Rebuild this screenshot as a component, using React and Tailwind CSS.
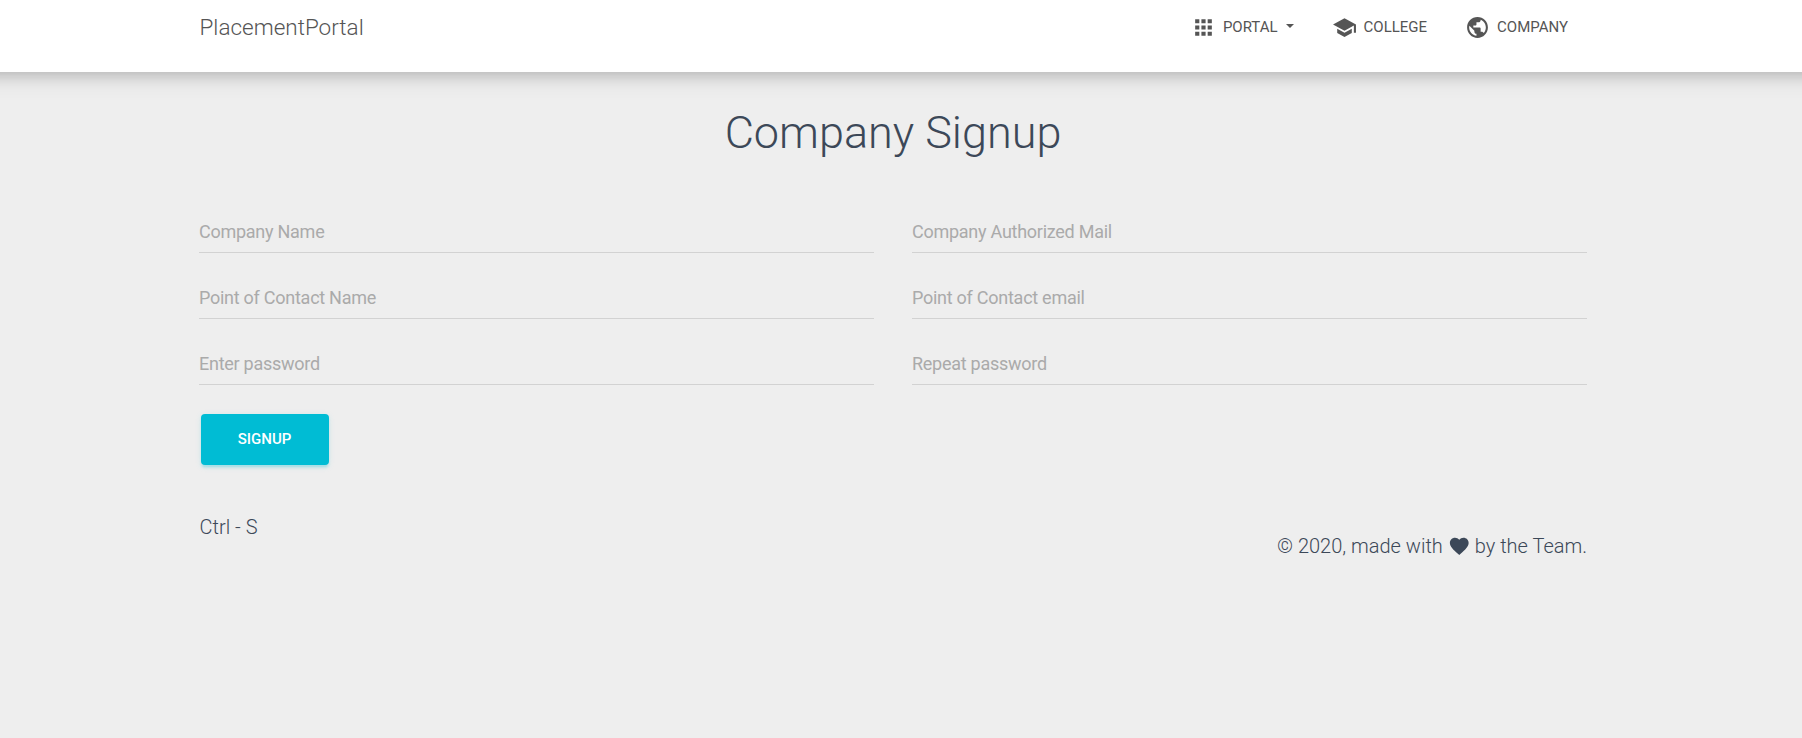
import { MdApps, MdSchool, MdPublic, MdFavorite } from "react-icons/md";

const fields = [
  "Company Name",
  "Company Authorized Mail",
  "Point of Contact Name",
  "Point of Contact email",
  "Enter password",
  "Repeat password",
];

export default function App() {
  return (
    <div className="min-h-screen overflow-hidden bg-[#eeeeee] font-['Roboto',sans-serif] font-light text-[#3c4858]">
      <nav className="-mx-10 h-[72px] bg-white px-10 text-[#555555] shadow-[0_5px_22.5px_0_rgba(0,0,0,0.12),0_8.75px_12.5px_-6.25px_rgba(0,0,0,0.15)]">
        <div className="pr-4">
          <div className="mx-auto flex h-[54px] w-[1388px] items-center justify-between">
            <a className="pl-[0.5px] text-[22.5px] leading-[30px]">PlacementPortal</a>
            <div className="flex items-center text-[15px] font-normal leading-[25px]">
              <a className="flex items-center">
                <MdApps className="mr-[7px] size-[25px]" />
                <span>PORTAL</span>
                <span className="ml-[8px] mb-[3px] border-x-[4.5px] border-t-[4.5px] border-x-transparent border-t-[#555555]" />
              </a>
              <a className="ml-[38px] flex items-center">
                <MdSchool className="mr-[7px] size-[25px]" />
                <span>COLLEGE</span>
              </a>
              <a className="ml-[38px] mr-[19px] flex items-center">
                <MdPublic className="mr-[7px] size-[25px]" />
                <span>COMPANY</span>
              </a>
            </div>
          </div>
        </div>
      </nav>
      <div className="pr-4">
        <main className="mx-auto w-[1388px] pt-[27px]">
          <h2 className="text-center text-[45px] leading-[68px]">Company Signup</h2>
          <form className="mt-[41px]">
            <div className="grid grid-cols-2 gap-x-[38px] gap-y-[21px]">
              {fields.map((label) => (
                <label key={label} className="block h-[45px] border-b border-[#d2d2d2] pt-[9px]">
                  <span className="block text-[18px] font-normal leading-[30px] tracking-[-0.26px] text-[#aaaaaa]">{label}</span>
                </label>
              ))}
            </div>
            <button
              type="button"
              className="ml-[2px] mt-[29px] block h-[51px] w-[128px] rounded-[4px] bg-[#00bcd4] pr-[1px] text-[15px] font-medium text-white shadow-[0_2.5px_2.5px_0_rgba(0,188,212,0.14),0_3.75px_1.25px_-2.5px_rgba(0,188,212,0.1),0_1.25px_6.25px_0_rgba(0,188,212,0.12)]"
            >
              SIGNUP
            </button>
          </form>
          <footer className="mt-[47px] flex justify-between text-[20px] leading-[30px]">
            <span className="pl-[0.5px]">Ctrl - S</span>
            <div className="mt-[19px] flex items-center">
              <span>© 2020, made with</span>
              <MdFavorite className="ml-[5.5px] mr-[4px] size-[22.5px]" />
              <span>by the Team.</span>
            </div>
          </footer>
        </main>
      </div>
    </div>
  );
}
